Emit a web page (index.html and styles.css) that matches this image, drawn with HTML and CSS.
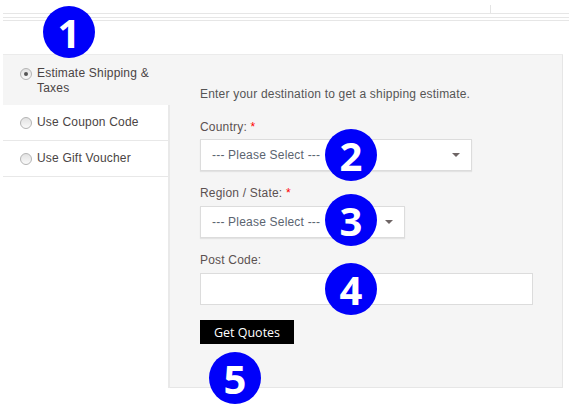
FILE: index.html
```
<!DOCTYPE html>
<html>
<head>
<meta charset="utf-8">
<link rel="stylesheet" href="styles.css">
</head>
<body>
<div class="top">
  <div class="tick"></div>
  <div class="rule"></div>
  <div class="rule rule2"></div>
  <div class="rule rule3"></div>
</div>
<div class="box">
  <div class="tabs">
    <div class="tab active"><span class="radio on"></span><span class="tab-text">Estimate Shipping &amp;<br>Taxes</span></div>
    <div class="rest">
      <div class="tab"><span class="radio"></span><span class="tab-text">Use Coupon Code</span></div>
      <div class="tab"><span class="radio"></span><span class="tab-text">Use Gift Voucher</span></div>
    </div>
  </div>
  <div class="content">
    <p class="intro">Enter your destination to get a shipping estimate.</p>
    <div class="label">Country: <span class="req">*</span></div>
    <div class="select wide"><span>--- Please Select ---</span><span class="caret"></span></div>
    <div class="label">Region / State: <span class="req">*</span></div>
    <div class="select narrow"><span>--- Please Select ---</span><span class="caret"></span></div>
    <div class="label">Post Code:</div>
    <div class="input"></div>
    <button class="btn">Get Quotes</button>
  </div>
</div>
<div class="badge b1">1</div>
<div class="badge b2">2</div>
<div class="badge b3">3</div>
<div class="badge b4">4</div>
<div class="badge b5">5</div>
</body>
</html>
```
FILE: styles.css
```
html, body {
  margin: 0;
  padding: 0;
  background: #fff;
}
body {
  position: relative;
  width: 569px;
  height: 410px;
  overflow: hidden;
  font-family: "Liberation Sans", Arial, sans-serif;
  font-size: 12px;
  line-height: 15px;
  letter-spacing: 0.2px;
}
.top {
  margin-left: 3px;
  padding-top: 5px;
}
.tick {
  margin-left: 487px;
  width: 1px;
  height: 8px;
  background: #e4e4e4;
}
.rule {
  height: 1px;
  background: #e6e6e6;
}
.rule2 { margin-top: 3px; }
.rule3 { margin-top: 2px; }
.box {
  margin-left: 3px;
  margin-top: 33px;
  width: 560px;
  display: flex;
  border-top: 1px solid #ebebeb;
}
.tabs {
  width: 167px;
  display: flex;
  flex-direction: column;
}
.tab {
  display: flex;
  align-items: flex-start;
  padding: 10px 0 10px 17px;
  color: #4a4444;
}
.tab.active {
  background: #f5f5f5;
  padding-top: 11px;
  padding-bottom: 9px;
}
.rest {
  flex: 1;
  background: #fff;
  border-right: 2px solid #e9e9e9;
}
.rest .tab {
  border-bottom: 1px solid #e8e8e8;
}
.radio {
  width: 10px;
  height: 10px;
  margin-top: 2px;
  margin-right: 5px;
  border-radius: 50%;
  border: 1px solid #b4b4b4;
  background: linear-gradient(#e2e2e2, #fafafa);
  display: flex;
  align-items: center;
  justify-content: center;
  flex: none;
}
.radio.on::after {
  content: "";
  width: 4px;
  height: 4px;
  border-radius: 50%;
  background: #555;
}
.content {
  flex: 1;
  background: #f5f5f5;
  border-right: 1px solid #e6e6e6;
  border-bottom: 1px solid #e6e6e6;
  padding: 32px 0 43px 30px;
}
.intro {
  margin: 0 0 18px;
  color: #555;
}
.label {
  color: #5b5151;
  margin-bottom: 4px;
}
.req {
  color: #f00;
}
.select {
  box-sizing: border-box;
  height: 32px;
  border: 1px solid #dcdcdc;
  background: #fff;
  box-shadow: 0 1px 1px rgba(0, 0, 0, 0.07);
  display: flex;
  align-items: center;
  justify-content: space-between;
  padding: 0 11px 0 11px;
  color: #5b6470;
  margin-bottom: 15px;
}
.wide { width: 272px; }
.narrow { width: 205px; }
.narrow + .label, .wide + .label { margin-bottom: 5px; }
.caret {
  width: 0;
  height: 0;
  border-left: 4px solid transparent;
  border-right: 4px solid transparent;
  border-top: 4px solid #6e6565;
}
.input {
  box-sizing: border-box;
  width: 333px;
  height: 32px;
  border: 1px solid #dcdcdc;
  background: #fff;
  margin-bottom: 15px;
}
.btn {
  display: block;
  width: 94px;
  height: 24px;
  border: 0;
  padding: 0;
  background: #000;
  color: #fff;
  font-family: "Open Sans", "Liberation Sans", sans-serif;
  font-size: 12.5px;
  letter-spacing: 0;
}
.badge {
  position: absolute;
  width: 52px;
  height: 52px;
  border-radius: 50%;
  background: #0000fa;
  color: #fff;
  font-family: "Open Sans", "DejaVu Sans", sans-serif;
  font-weight: 700;
  font-size: 40px;
  line-height: 54px;
  letter-spacing: 0;
  text-align: center;
}
.b1 { left: 43px; top: 6px; }
.b2 { left: 325px; top: 129px; }
.b3 { left: 325px; top: 194px; }
.b4 { left: 325px; top: 263px; }
.b5 { left: 209px; top: 352px; }
```
